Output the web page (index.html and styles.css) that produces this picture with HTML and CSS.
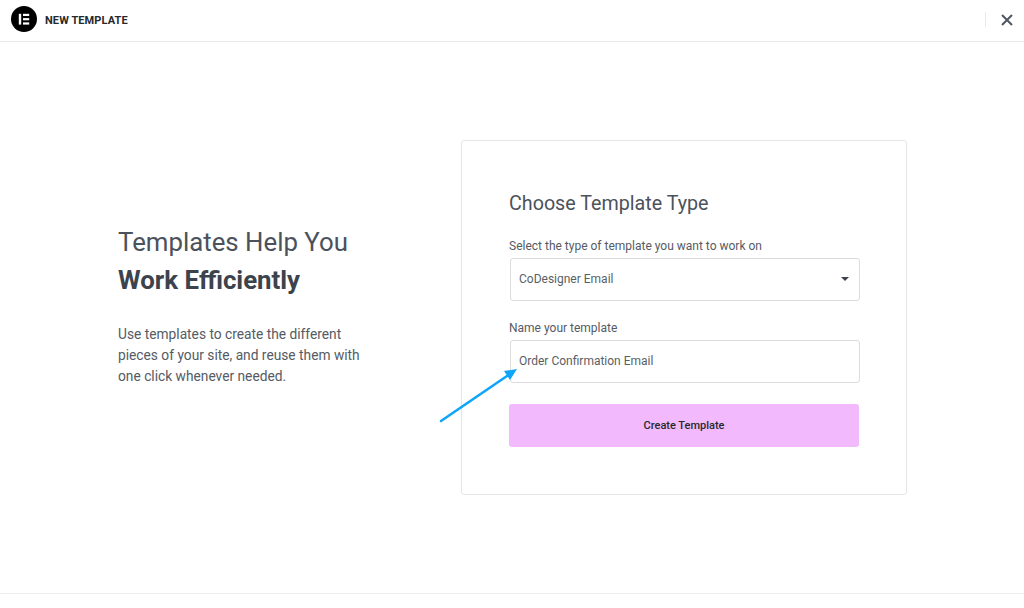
FILE: index.html
```html
<!DOCTYPE html>
<html lang="en">
<head>
  <meta charset="UTF-8">
  <title>New Template</title>
  <link rel="stylesheet" href="styles.css">
</head>
<body>
  <header class="top-bar">
    <div class="brand">
      <span class="logo">
        <svg width="26" height="26" viewBox="0 0 26 26">
          <circle cx="13" cy="13" r="13" fill="#000"/>
          <rect x="7.8" y="7.8" width="2.4" height="10.8" fill="#fff"/>
          <rect x="12" y="7.8" width="6.2" height="2.2" fill="#fff"/>
          <rect x="12" y="12.1" width="6.2" height="2.2" fill="#fff"/>
          <rect x="12" y="16.4" width="6.2" height="2.2" fill="#fff"/>
        </svg>
      </span>
      <span class="brand-title">NEW TEMPLATE</span>
    </div>
    <div class="close-wrap">
      <svg width="12" height="12" viewBox="0 0 12 12">
        <path d="M1 1L11 11M11 1L1 11" stroke="#4f5761" stroke-width="2" fill="none"/>
      </svg>
    </div>
  </header>

  <main class="content">
    <section class="intro">
      <h1>Templates Help You <strong>Work Efficiently</strong></h1>
      <p>Use templates to create the different pieces of your site, and reuse them with one click whenever needed.</p>
    </section>

    <form class="card">
      <h2>Choose Template Type</h2>
      <div class="form-group">
        <label for="template-type">Select the type of template you want to work on</label>
        <div class="field">
          <span id="template-type">CoDesigner Email</span>
          <span class="caret"></span>
        </div>
      </div>
      <div class="form-group">
        <label for="template-name">Name your template</label>
        <div class="field">
          <span id="template-name">Order Confirmation Email</span>
        </div>
      </div>
      <button type="button">Create Template</button>
    </form>
  </main>

  <svg class="arrow" width="84" height="60" viewBox="0 0 84 60">
    <path d="M2 56L68 11" stroke="#0ea5fb" stroke-width="2.6" stroke-linecap="round" fill="none"/>
    <path d="M78 4L65 6L71 15Z" fill="#0ea5fb"/>
  </svg>
</body>
</html>
```

FILE: styles.css
```css
body {
  font-family: Roboto, sans-serif;
  margin: 0;
  padding: 0;
  background: #fff;
  color: #3f444b;
  height: 608px;
  overflow: hidden;
  position: relative;
}
.top-bar {
  height: 41px;
  border-bottom: 1px solid #e9e9ea;
  display: flex;
  align-items: center;
  justify-content: space-between;
  padding: 0 11px;
}
.brand {
  display: flex;
  align-items: center;
  gap: 8px;
}
.logo {
  display: flex;
  margin-bottom: 3px;
}
.brand-title {
  font-size: 11px;
  font-weight: 700;
  color: #26292c;
  letter-spacing: 0.1px;
}
.close-wrap {
  border-left: 1px solid #e9e9ea;
  padding-left: 15px;
  height: 15px;
  display: flex;
  align-items: center;
  margin-top: -2px;
}
.content {
  height: 551px;
  border-bottom: 1px solid #eeeeef;
  display: flex;
  align-items: center;
}
.intro {
  width: 461px;
  flex-shrink: 0;
  box-sizing: border-box;
  padding: 0 100px 25px 118px;
}
.intro h1 {
  margin: 0 0 25px;
  font-size: 25.8px;
  font-weight: 400;
  line-height: 38px;
  color: #4b525c;
}
.intro strong {
  display: block;
  font-weight: 700;
  color: #3c434d;
}
.intro p {
  margin: 0;
  font-size: 13.75px;
  line-height: 21px;
  color: #555b64;
}
.card {
  width: 446px;
  height: 355px;
  box-sizing: border-box;
  padding: 48px 47px 0;
  background: #fff;
  border: 1px solid #e6e6e8;
  border-radius: 3px;
}
.card h2 {
  margin: 0 0 21px;
  font-size: 19.7px;
  font-weight: 400;
  line-height: 29px;
  color: #4c525b;
}
.form-group {
  margin-bottom: 20px;
}
label {
  display: block;
  font-size: 12px;
  line-height: 14px;
  margin-bottom: 5px;
  color: #555b64;
}
.field {
  height: 43px;
  box-sizing: border-box;
  margin-left: 1px;
  width: 350px;
  padding: 0 9px 2px 8px;
  border: 1px solid #dcdcde;
  border-radius: 3px;
  display: flex;
  align-items: center;
  justify-content: space-between;
  font-size: 12px;
  color: #5a5f66;
}
.caret {
  width: 0;
  height: 0;
  border-left: 4px solid transparent;
  border-right: 4px solid transparent;
  border-top: 4px solid #3f444b;
  margin-right: 1px;
}
button {
  display: block;
  width: 350px;
  height: 43px;
  margin-top: 21px;
  background: #f2b9fc;
  color: #26292c;
  border: none;
  border-radius: 3px;
  font-family: inherit;
  font-size: 11px;
  font-weight: 500;
  cursor: pointer;
}
.arrow {
  position: absolute;
  left: 439px;
  top: 365px;
}
```
